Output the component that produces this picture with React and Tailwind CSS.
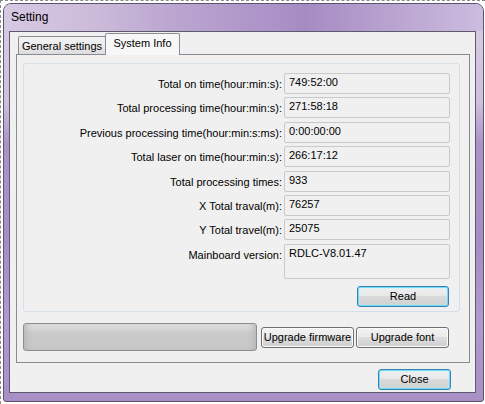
import React from "react";

const rows = [
  ["Total on time(hour:min:s):", "749:52:00"],
  ["Total processing time(hour:min:s):", "271:58:18"],
  ["Previous processing time(hour:min:s:ms):", "0:00:00:00"],
  ["Total laser on time(hour:min:s):", "266:17:12"],
  ["Total processing times:", "933"],
  ["X Total traval(m):", "76257"],
  ["Y Total travel(m):", "25075"],
];

const btn =
  "flex items-center justify-center rounded-[3px] border border-[#707070] bg-[linear-gradient(#f2f2f2,#ebebeb_45%,#dddddd_50%,#cfcfcf)] shadow-[inset_0_0_0_1px_#fbfbfb] text-black";
const btnDefault =
  "flex items-center justify-center rounded-[3px] border border-[#3c7fb1] bg-[linear-gradient(#f0f0f0,#e8e8e8_45%,#dadada_50%,#d0d0d0)] shadow-[inset_0_0_0_1px_#6fdcfb,inset_0_0_2px_1px_#bfeefd] text-black";

export default function App() {
  return (
    <div className="w-[485px] h-[404px] overflow-hidden bg-white border-l border-t border-dashed border-[#8a8a8a] pl-[2px] pt-[2px] font-['Liberation_Sans',Arial,sans-serif] text-[11px] leading-[13px] text-black">
      <div className="w-[481px] h-[399px] rounded-t-[8px] rounded-b-[3px] border border-[#59546a] bg-[linear-gradient(to_bottom,#d9cde6_0%,#cdbfdd_25%,#ab93c8_35%,#a68cc4_60%,#b09acf_80%,#a98fc6_100%)] flex flex-col">
        <div className="h-[27px] rounded-t-[7px] bg-[linear-gradient(to_right,#d6c9e3_0%,#cbbad9_20%,#bba6d0_35%,#ad93c8_55%,#a68bc3_63%,#b6a0ce_78%,#ccbcdf_100%)] flex items-center pl-[7px] text-[12px] text-black">
          Setting
        </div>
        <div className="pl-[5px]">
          <div className="w-[467px] h-[362px] border border-[#5e5a6e] bg-[#f0f0f0]">
            <div className="ml-[6px] h-[22px] flex items-end pl-[2px]">
              <div className="w-[88px] h-[18px] border border-b-0 border-[#898c95] rounded-t-[2px] bg-[linear-gradient(#f3f3f3,#ebebeb_50%,#dcdcdc)] flex items-center justify-center pt-[1px]">
                General settings
              </div>
              <div className="relative z-10 -ml-px -mb-px w-[75px] h-[22px] border border-b-0 border-[#898c95] rounded-t-[2px] bg-[#f7f7f7] flex items-start justify-center pt-[3px]">
                System Info
              </div>
            </div>
            <div className="ml-[6px] w-[454px] h-[309px] border border-[#898c95] bg-[#f0f0f0] pt-[8px] pl-[6px]">
              <div className="w-[437px] h-[249px] border border-[#d5dfe5] rounded-[3px] pt-[9px] flex flex-col gap-[3.4px]">
                {rows.map(([label, value]) => (
                  <div key={label} className="flex">
                    <div className="w-[258px] text-right pt-[5px]">{label}</div>
                    <div className="ml-[2px] w-[166px] h-[21px] border border-[#c9c9c9] rounded-[2px] pl-[4px] pt-[2px]">
                      {value}
                    </div>
                  </div>
                ))}
                <div className="flex">
                  <div className="w-[258px] text-right pt-[5px]">Mainboard version:</div>
                  <div className="ml-[2px] w-[166px] h-[35px] border border-[#c9c9c9] rounded-[2px] pl-[4px] pt-[2px]">
                    RDLC-V8.01.47
                  </div>
                </div>
                <div className={`${btnDefault} ml-[333px] mt-[3.6px] w-[92px] h-[21px]`}>Read</div>
              </div>
              <div className="mt-[11px] flex items-center">
                <div className="w-[234px] h-[28px] rounded-[3px] border border-[#8e8e8e] bg-[linear-gradient(#e2e2e2,#cacaca_35%,#c8c8c8)] shadow-[inset_6px_0_6px_-4px_#b5b5b5,inset_-6px_0_6px_-4px_#b5b5b5]"></div>
                <div className={`${btn} ml-[4px] w-[93px] h-[21px]`}>Upgrade firmware</div>
                <div className={`${btn} ml-[2px] w-[93px] h-[21px]`}>Upgrade font</div>
              </div>
            </div>
            <div className={`${btnDefault} mt-[6px] ml-[368px] w-[73px] h-[21px]`}>Close</div>
          </div>
        </div>
      </div>
    </div>
  );
}
